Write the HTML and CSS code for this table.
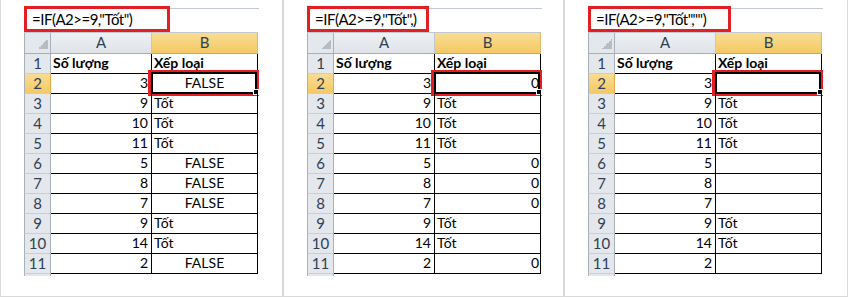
FILE: index.html
```html
<!DOCTYPE html>
<html lang="vi">
<head>
<meta charset="utf-8">
<title>IF</title>
<link rel="stylesheet" href="styles.css">
</head>
<body>
<div class="panel p1">
  <div class="fbar"><div class="fbox w1">=IF(A2&gt;=9,"Tốt")</div></div>
  <div class="sheet">
    <div class="corner"></div><div class="ch">A</div><div class="ch sel">B</div>
    <div class="rh">1</div><div class="c b">Số lượng</div><div class="c b">Xếp loại</div>
    <div class="rh sel">2</div><div class="c n">3</div><div class="c m">FALSE<i class="redbox"></i><i class="selbox"></i><i class="handle"></i></div>
    <div class="rh">3</div><div class="c n">9</div><div class="c">Tốt</div>
    <div class="rh">4</div><div class="c n">10</div><div class="c">Tốt</div>
    <div class="rh">5</div><div class="c n">11</div><div class="c">Tốt</div>
    <div class="rh">6</div><div class="c n">5</div><div class="c m">FALSE</div>
    <div class="rh">7</div><div class="c n">8</div><div class="c m">FALSE</div>
    <div class="rh">8</div><div class="c n">7</div><div class="c m">FALSE</div>
    <div class="rh">9</div><div class="c n">9</div><div class="c">Tốt</div>
    <div class="rh">10</div><div class="c n">14</div><div class="c">Tốt</div>
    <div class="rh">11</div><div class="c n">2</div><div class="c m">FALSE</div>
    <div class="stub"></div>
  </div>
</div>
<div class="panel p2">
  <div class="fbar"><div class="fbox w2">=IF(A2&gt;=9,"Tốt",)</div></div>
  <div class="sheet">
    <div class="corner"></div><div class="ch">A</div><div class="ch sel">B</div>
    <div class="rh">1</div><div class="c b">Số lượng</div><div class="c b">Xếp loại</div>
    <div class="rh sel">2</div><div class="c n">3</div><div class="c z">0<i class="redbox"></i><i class="selbox"></i><i class="handle"></i></div>
    <div class="rh">3</div><div class="c n">9</div><div class="c">Tốt</div>
    <div class="rh">4</div><div class="c n">10</div><div class="c">Tốt</div>
    <div class="rh">5</div><div class="c n">11</div><div class="c">Tốt</div>
    <div class="rh">6</div><div class="c n">5</div><div class="c z">0</div>
    <div class="rh">7</div><div class="c n">8</div><div class="c z">0</div>
    <div class="rh">8</div><div class="c n">7</div><div class="c z">0</div>
    <div class="rh">9</div><div class="c n">9</div><div class="c">Tốt</div>
    <div class="rh">10</div><div class="c n">14</div><div class="c">Tốt</div>
    <div class="rh">11</div><div class="c n">2</div><div class="c z">0</div>
    <div class="stub"></div>
  </div>
</div>
<div class="panel p3">
  <div class="fbar"><div class="fbox w3">=IF(A2&gt;=9,"Tốt","")</div></div>
  <div class="sheet">
    <div class="corner"></div><div class="ch">A</div><div class="ch sel">B</div>
    <div class="rh">1</div><div class="c b">Số lượng</div><div class="c b">Xếp loại</div>
    <div class="rh sel">2</div><div class="c n">3</div><div class="c"><i class="redbox"></i><i class="selbox"></i><i class="handle"></i></div>
    <div class="rh">3</div><div class="c n">9</div><div class="c">Tốt</div>
    <div class="rh">4</div><div class="c n">10</div><div class="c">Tốt</div>
    <div class="rh">5</div><div class="c n">11</div><div class="c">Tốt</div>
    <div class="rh">6</div><div class="c n">5</div><div class="c"></div>
    <div class="rh">7</div><div class="c n">8</div><div class="c"></div>
    <div class="rh">8</div><div class="c n">7</div><div class="c"></div>
    <div class="rh">9</div><div class="c n">9</div><div class="c">Tốt</div>
    <div class="rh">10</div><div class="c n">14</div><div class="c">Tốt</div>
    <div class="rh">11</div><div class="c n">2</div><div class="c"></div>
    <div class="stub"></div>
  </div>
</div>
</body>
</html>
```
FILE: styles.css
```css
* { box-sizing: border-box; }
body {
  margin: 0;
  display: flex;
  background: #fff;
  font-family: Lato, "Noto Sans", sans-serif;
  color: #000;
}
.panel {
  height: 297px;
  border: 1px solid #d9d9d9;
  border-top: 0;
  padding: 8px 0 0 23px;
}
.p1 { width: 283px; }
.p2 { width: 281px; }
.p3 { width: 284px; }

.fbar {
  display: flex;
  align-items: flex-start;
  width: 235px;
  height: 24px;
  border-top: 1px solid #c3c9d1;
}
.fbox {
  margin-top: -3px;
  height: 26px;
  border: 3px solid #e31e24;
  padding-left: 5px;
  font-size: 15px;
  letter-spacing: -0.5px;
  line-height: 20px;
  white-space: nowrap;
  overflow: hidden;
}
.w1 { width: 146px; }
.w2 { width: 122px; }
.w3 { width: 143px; }

.sheet {
  display: grid;
  grid-template-columns: 27px 101px 106px;
  grid-template-rows: 21px repeat(11, 20px) 2px;
  width: 234px;
  border-top: 1px solid #c3c9d1;
}
.corner {
  background-color: #e4e7eb;
  background-image: linear-gradient(135deg, transparent 50%, #b7bcc3 50%);
  background-size: 10px 10px;
  background-repeat: no-repeat;
  background-position: right 2px bottom 4px;
  border-left: 1px solid #a9b0b9;
  border-right: 1px solid #a9b0b9;
  border-bottom: 1px solid #9eb0c3;
}
.ch {
  background: linear-gradient(#eef0f3, #dfe3e8);
  border-right: 1px solid #c1c7cf;
  border-bottom: 1px solid #9eb0c3;
  text-align: center;
  font-size: 15px;
  line-height: 19px;
  color: #2f3f55;
}
.ch.sel {
  background: linear-gradient(#f9dc93, #f4c965);
  border-bottom-color: #f0a03a;
  border-right-color: #e6b565;
}
.rh {
  background: #e4e7eb;
  border-left: 1px solid #a9b0b9;
  border-right: 1px solid #a9b0b9;
  border-bottom: 1px solid #c9ced5;
  text-align: center;
  font-size: 15px;
  line-height: 18px;
  color: #2f3f55;
}
.rh.sel {
  background: linear-gradient(#f9dc93, #f4c965);
  border-right-color: #e9a84a;
}
.stub {
  grid-column: 1;
  background: #e4e7eb;
  border-left: 1px solid #a9b0b9;
  border-right: 1px solid #a9b0b9;
}
.c {
  position: relative;
  border-right: 1px solid #000;
  border-bottom: 1px solid #000;
  font-size: 14px;
  line-height: 18px;
  padding: 0 2px;
  white-space: nowrap;
}
.b { font-weight: bold; }
.n { text-align: right; padding-right: 3px; }
.m { text-align: center; }
.z { text-align: right; padding-right: 1px; }

.redbox {
  position: absolute;
  left: -4px;
  top: -4px;
  width: 111px;
  height: 26px;
  border: 3px solid #e31e24;
}
.selbox {
  position: absolute;
  left: -1px;
  top: -2px;
  width: 106px;
  height: 22px;
  border: 2px solid #000;
}
.handle {
  position: absolute;
  left: 101px;
  top: 15px;
  width: 6px;
  height: 6px;
  background: #000;
  border: 1px solid #fff;
}
```
